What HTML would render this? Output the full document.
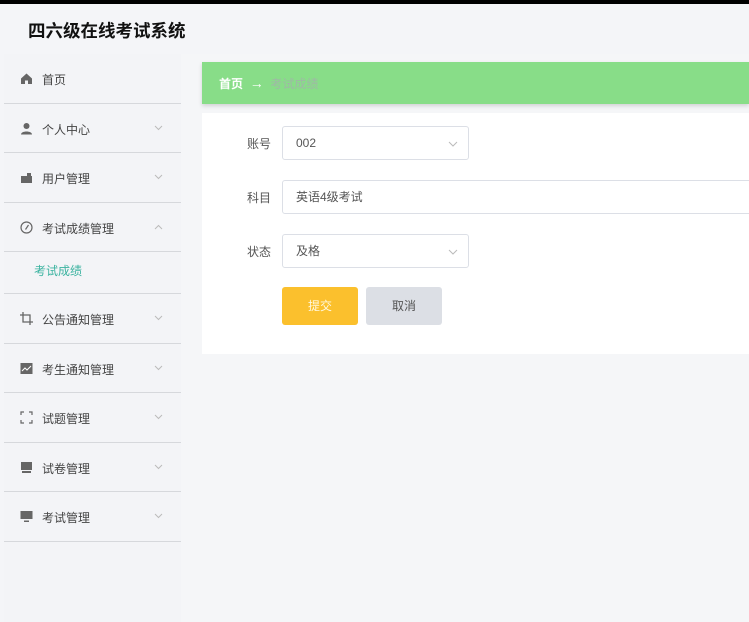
<!DOCTYPE html>
<html><head><meta charset="utf-8"><style>
*{margin:0;padding:0;box-sizing:border-box}
body{width:749px;height:622px;overflow:hidden;background:#f4f5f8;font-family:"Liberation Sans","Noto Sans CJK SC",sans-serif;position:relative;color:#333}
.top{position:absolute;left:0;top:0;width:749px;height:4px;background:#000}
.title{position:absolute;left:28px;top:18px;font-size:17.5px;font-weight:bold;color:#111}
.side{position:absolute;left:4px;top:54px;width:177px;height:568px;background:#f3f4f7}
.item{height:49.5px;border-bottom:1px solid #d6d8dc;position:relative;font-size:12px;color:#444}
.item span.t{position:absolute;left:38px;top:17px}
.item .ic{position:absolute;left:16px;top:18px;width:13px;height:13px}
.item .ar{position:absolute;left:150px;top:21px;width:9px;height:6px}
.sub{height:42px;border-bottom:1px solid #d6d8dc;font-size:12px;color:#3bb3a0;padding:10px 0 0 30px}
.main{position:absolute;left:181px;top:54px;width:568px;height:568px;background:#f5f6f8}
.bar{position:absolute;left:202px;top:62px;width:547px;height:42px;background:#88dd88;box-shadow:0 2px 4px rgba(0,0,0,.15);font-size:12px;line-height:42px;padding-left:17px;color:#fff}
.card{position:absolute;left:202px;top:113px;width:547px;height:241px;background:#fff}
.lab{position:absolute;left:247px;font-size:12px;color:#555}
.inp{position:absolute;left:282px;height:34px;border:1px solid #dcdfe6;border-radius:3px;font-size:12px;line-height:32px;padding-left:13px;color:#555;background:#fff}
.inp svg{position:absolute;right:10px;top:14px;width:10px;height:6px}
.btn{position:absolute;top:287px;height:38px;width:76px;border-radius:3px;font-size:12px;line-height:38px;text-align:center}
</style></head><body>
<div class="top"></div>
<div class="title">四六级在线考试系统</div>
<div class="main"></div>
<div class="side">
 <div class="item"><svg class="ic" viewBox="0 0 13 13"><path d="M1 6.5L6.5 1.5 12 6.5V12H8V8.5H5V12H1Z" fill="#666"/></svg><span class="t">首页</span></div>
 <div class="item"><svg class="ic" viewBox="0 0 13 13"><circle cx="6.5" cy="4" r="3" fill="#666"/><path d="M1 12.5C1 8.5 12 8.5 12 12.5Z" fill="#666"/></svg><span class="t">个人中心</span><svg class="ar" viewBox="0 0 9 6"><path d="M1 1L4.5 4.5 8 1" fill="none" stroke="#bbb"/></svg></div>
 <div class="item"><svg class="ic" viewBox="0 0 13 13"><rect x="1" y="5" width="11" height="7" fill="#666"/><rect x="7" y="2" width="4" height="3" fill="#666"/></svg><span class="t">用户管理</span><svg class="ar" viewBox="0 0 9 6"><path d="M1 1L4.5 4.5 8 1" fill="none" stroke="#bbb"/></svg></div>
 <div class="item"><svg class="ic" viewBox="0 0 13 13"><circle cx="6.5" cy="6.5" r="5.5" fill="none" stroke="#666" stroke-width="1.2"/><path d="M8.5 4L5.5 8.5" stroke="#666" stroke-width="1.2"/></svg><span class="t">考试成绩管理</span><svg class="ar" viewBox="0 0 9 6"><path d="M1 5L4.5 1.5 8 5" fill="none" stroke="#bbb"/></svg></div>
 <div class="sub">考试成绩</div>
 <div class="item"><svg class="ic" viewBox="0 0 13 13"><path d="M3 0V10H13M0 3H10V13" fill="none" stroke="#666" stroke-width="1.3"/></svg><span class="t">公告通知管理</span><svg class="ar" viewBox="0 0 9 6"><path d="M1 1L4.5 4.5 8 1" fill="none" stroke="#bbb"/></svg></div>
 <div class="item"><svg class="ic" viewBox="0 0 13 13"><rect x="0.5" y="1" width="12" height="11" fill="#666"/><path d="M2 9L5 6 7 8 11 4" stroke="#fff" fill="none"/></svg><span class="t">考生通知管理</span><svg class="ar" viewBox="0 0 9 6"><path d="M1 1L4.5 4.5 8 1" fill="none" stroke="#bbb"/></svg></div>
 <div class="item"><svg class="ic" viewBox="0 0 13 13"><path d="M1 4V1H4M9 1H12V4M12 9V12H9M4 12H1V9" fill="none" stroke="#666" stroke-width="1.2"/></svg><span class="t">试题管理</span><svg class="ar" viewBox="0 0 9 6"><path d="M1 1L4.5 4.5 8 1" fill="none" stroke="#bbb"/></svg></div>
 <div class="item"><svg class="ic" viewBox="0 0 13 13"><rect x="1" y="1" width="11" height="8" fill="#666"/><rect x="2" y="10" width="9" height="2" fill="#666"/></svg><span class="t">试卷管理</span><svg class="ar" viewBox="0 0 9 6"><path d="M1 1L4.5 4.5 8 1" fill="none" stroke="#bbb"/></svg></div>
 <div class="item"><svg class="ic" viewBox="0 0 13 13"><rect x="0.5" y="1" width="12" height="8" fill="#666"/><rect x="4" y="10.5" width="5" height="1.5" fill="#666"/></svg><span class="t">考试管理</span><svg class="ar" viewBox="0 0 9 6"><path d="M1 1L4.5 4.5 8 1" fill="none" stroke="#bbb"/></svg></div>
</div>
<div class="bar"><b>首页</b> &nbsp;<span style="font-size:14px">→</span>&nbsp; <span style="color:#9fb8a6">考试成绩</span></div>
<div class="card"></div>
<div class="lab" style="top:135px">账号</div>
<div class="inp" style="top:126px;width:187px">002<svg viewBox="0 0 10 6"><path d="M1 1L5 5 9 1" fill="none" stroke="#bbb"/></svg></div>
<div class="lab" style="top:189px">科目</div>
<div class="inp" style="top:180px;width:470px">英语4级考试</div>
<div class="lab" style="top:243px">状态</div>
<div class="inp" style="top:234px;width:187px">及格<svg viewBox="0 0 10 6"><path d="M1 1L5 5 9 1" fill="none" stroke="#bbb"/></svg></div>
<div class="btn" style="left:282px;background:#fbc02d;color:#fff8e0">提交</div>
<div class="btn" style="left:366px;background:#dcdfe5;color:#555">取消</div>
</body></html>
